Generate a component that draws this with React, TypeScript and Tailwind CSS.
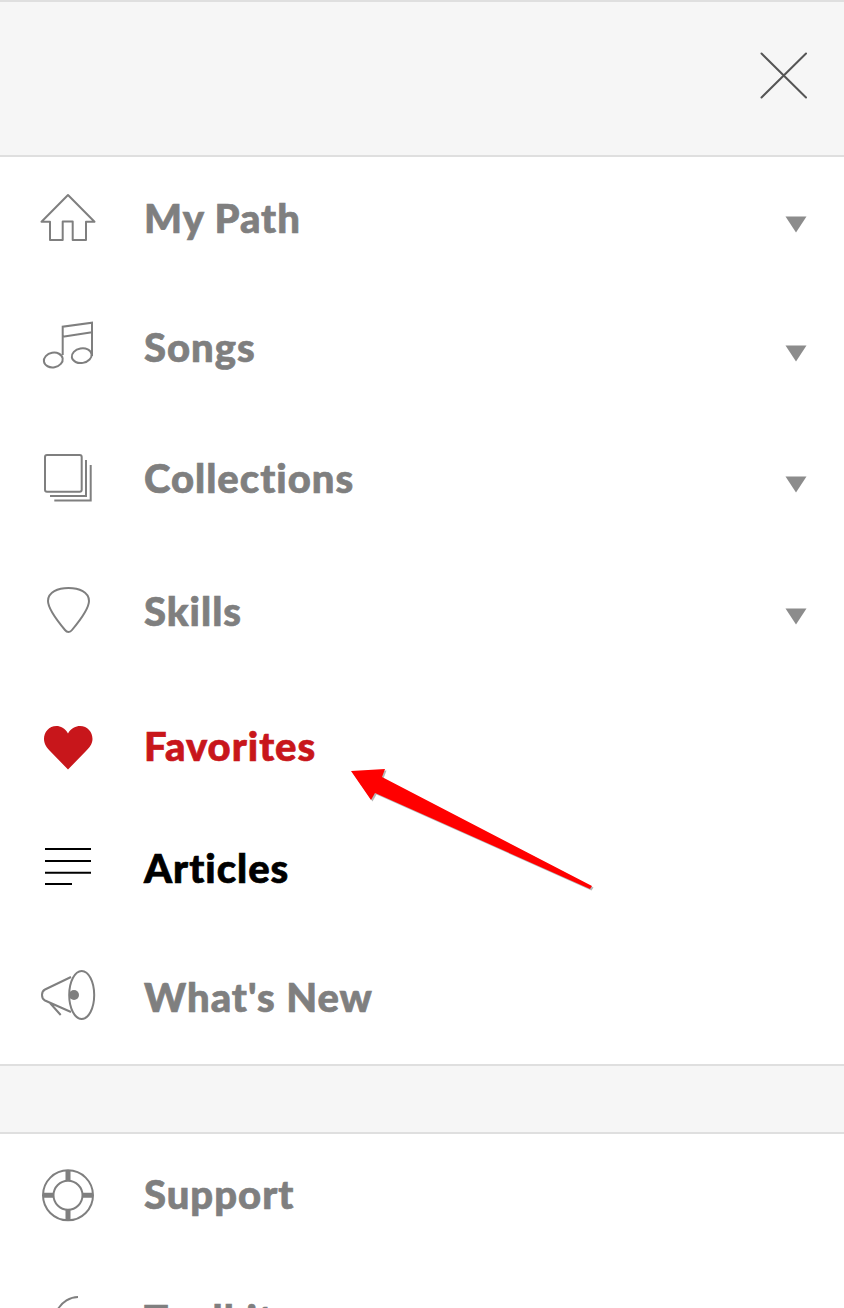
import React from "react";

const G = "#7f7f7f";

function Icon({ y, children }: { y: number; children: React.ReactNode }) {
  return (
    <svg width="56" height="56" viewBox={`40 ${y} 56 56`} fill="none" stroke={G} strokeWidth="2" className="shrink-0 overflow-visible">
      {children}
    </svg>
  );
}

function Tri() {
  return (
    <svg width="22" height="17" viewBox="0 0 22 17" className="ml-auto mt-[8px] shrink-0">
      <path d="M0.5 0.5H21.5L11 16.5Z" fill="#8c8c8c" />
    </svg>
  );
}

function Row({ h, label, icon, color = "text-[#7f7f7f]", arrow = false, extra = "", textMt = "mt-[-5px]" }: { h: string; label: string; icon: React.ReactNode; color?: string; arrow?: boolean; extra?: string; textMt?: string }) {
  return (
    <div className={`flex items-center pl-[40px] pr-[37px] ${h} ${extra}`}>
      {icon}
      <span className={`ml-[48px] ${textMt} text-[40px] font-black leading-[44px] tracking-[1px] [-webkit-text-stroke:0.7px_currentColor] ${color}`}>{label}</span>
      {arrow && <Tri />}
    </div>
  );
}

export default function App() {
  return (
    <div className="relative h-[1308px] w-[844px] overflow-hidden bg-white font-['Lato',sans-serif]">
      <div className="flex h-[157px] items-center justify-end border-y-2 border-[#dfdfdf] bg-[#f6f6f6] pr-[36px]">
        <svg width="48" height="48" viewBox="0 0 48 48" className="mt-[-6px]" stroke="#555555" strokeWidth="2" strokeLinecap="round">
          <path d="M1.5 1.5L46 45.5M46 1.5L1.5 45.5" />
        </svg>
      </div>

      <Row h="h-[127px]" label="My Path" arrow icon={<Icon y={192}><path d="M50 220.7H41.5L68 194L94.5 220.7H86V239H72.7V220.5H62.7V239H50Z" strokeLinejoin="round" /></Icon>} />
      <Row h="h-[130px]" label="Songs" arrow icon={<Icon y={321}><path d="M62.7 355V326.7L92 322.7V356M62.7 336.7L92 332.3" /><ellipse cx="53.3" cy="360" rx="9.5" ry="7.3" transform="rotate(-10 53.3 360)" /><ellipse cx="81.7" cy="355.7" rx="10" ry="7.3" transform="rotate(-10 81.7 355.7)" /></Icon>} />
      <Row h="h-[132px]" label="Collections" arrow icon={<Icon y={452}><rect x="45" y="455" width="36.7" height="36.7" rx="2" /><path d="M50 496H86V460M54.3 500.5H90.7V465" /></Icon>} />
      <Row h="h-[132px]" label="Skills" textMt="mt-[-3px]" arrow icon={<Icon y={584}><path d="M68.5 588C58 588 48 592 48 601C48 609 60 624 65 630C67 632.5 70 632.5 72 630C77 624 89 609 89 601C89 592 79 588 68.5 588Z" /></Icon>} />
      <Row h="h-[138px]" label="Favorites" textMt="mt-[-3px]" color="text-[#c8161b]" icon={<Icon y={719}><path d="M68 733.5C65 728 60.5 726 56.5 726C49 726 44 732 44 739C44 744 47 748 50 751L68 769.5L86 751C89 748 92.5 744 92.5 739C92.5 732 87.5 726 80 726C76 726 71 728 68 733.5Z" fill="#c8161b" stroke="none" /></Icon>} />
      <Row h="h-[104px]" label="Articles" textMt="mt-[-1px]" color="text-black" icon={<Icon y={840}><path d="M45 849H91M45 861H91M45 872.7H91M45 884H72" stroke="#000000" /></Icon>} />
      <Row h="h-[144px]" extra="pt-[10px]" label="What's New" textMt="mt-[-1px]" icon={<Icon y={969}><ellipse cx="81.7" cy="995" rx="12.5" ry="24" /><path d="M71 977L45 989.5C41 991.5 41 998.5 45 1000.5L71 1012M50 1003L60.7 1015" /><circle cx="74" cy="995" r="5" fill={G} stroke="none" /></Icon>} />

      <div className="h-[70px] border-y-2 border-[#dfdfdf] bg-[#f6f6f6]" />

      <Row h="h-[125px]" label="Support" icon={<Icon y={1167}><circle cx="68" cy="1193.3" r="25" /><circle cx="68" cy="1193.3" r="14.5" /><path d="M68 1168.5V1179M68 1208V1218.5M43 1193.3H53.5M82.5 1193.3H93" strokeWidth="5" /></Icon>} />
      <Row h="h-[125px]" label="Toolkit" icon={<Icon y={1297}><path d="M58 1312C62 1305 70 1300 78 1300" /></Icon>} />

      <svg width="844" height="1308" viewBox="0 0 844 1308" className="pointer-events-none absolute left-0 top-0">
        <path d="M351 771L385 769L382 777L592 886L590 889L375 793L371 800Z" fill="#7a7a7a" opacity="0.55" transform="translate(1.5 1.5)" />
        <path d="M351 771L385 769L382 777L592 886L590 889L375 793L371 800Z" fill="#ff0000" />
      </svg>
    </div>
  );
}
